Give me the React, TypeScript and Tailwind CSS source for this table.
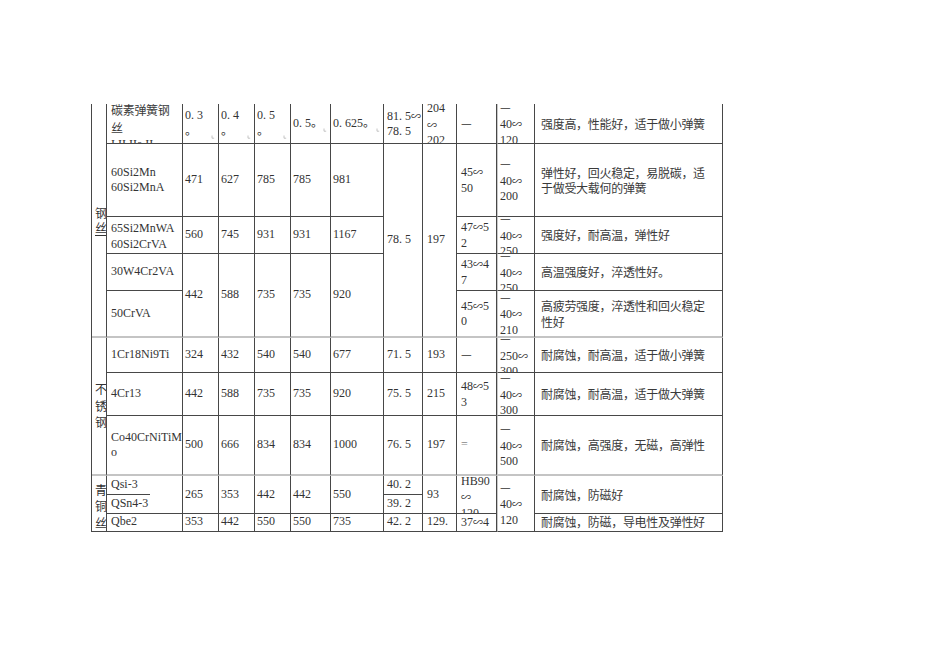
import React from 'react';

const M = "font-['Liberation_Serif','Noto_Sans_CJK_SC',serif] text-[12px] leading-[15.5px] text-[#333]";
const C =
  "font-['Noto_Sans_CJK_SC',sans-serif] text-[12px] leading-[15.5px] tracking-[-0.3px] text-[#3a3a3a]";
const DASH = "font-['Noto_Sans_CJK_SC',sans-serif] tracking-normal";

const P2 = 'pl-[4px]';
const PN = 'pl-[2px]';
const P8 = 'pl-[3px]';
const P9 = 'pl-[4px]';
const P10 = 'pl-[4px]';
const P11 = 'pl-[2px]';
const P12 = 'pl-[6px]';

type CellProps = {
  pad?: string;
  span?: string;
  grey?: boolean;
  top?: boolean;
  light?: boolean;
  font?: string;
  extra?: string;
  children?: React.ReactNode;
};

function Cell({ pad = '', span = '', grey, top, light, font = M, extra = '', children }: CellProps) {
  const cls = [
    'relative flex flex-col overflow-hidden border-r border-r-[#474747]',
    grey ? 'border-b-2 border-b-[#c4c4c4]' : 'border-b border-b-[#474747]',
    top ? 'justify-start' : 'justify-center',
    light ? 'border-l border-l-[#c8c8c8]' : '',
    pad,
    span,
    font,
    extra,
  ].join(' ');
  return <div className={cls}>{children}</div>;
}

function Tilde() {
  return <span className="font-['Noto_Sans_CJK_SC',sans-serif] text-[10px] text-[#333]">∽</span>;
}

function TL({ s }: { s: string }) {
  const parts = s.split('∽');
  return (
    <>
      {parts.map((p, i) => (
        <React.Fragment key={i}>
          {i > 0 && <Tilde />}
          {p}
        </React.Fragment>
      ))}
    </>
  );
}

function L({ children }: { children: React.ReactNode }) {
  return <div className="whitespace-nowrap">{typeof children === 'string' ? <TL s={children} /> : children}</div>;
}

function Dash() {
  return <span className={DASH}>—</span>;
}

function Mark({ high }: { high?: boolean }) {
  return (
    <svg
      className={high ? 'absolute right-[3px] bottom-[11px]' : 'absolute right-[3px] bottom-[4px]'}
      width="4"
      height="4"
      viewBox="0 0 4 4"
    >
      <path d="M1 0.5 V3.2 H3.2" stroke="#b5b5b5" strokeWidth="0.8" fill="none" />
    </svg>
  );
}

function Nums({ v, grey, span, top }: { v: string[]; grey?: boolean; span?: string; top?: boolean }) {
  return (
    <>
      {v.map((x, i) => (
        <Cell key={i} pad={PN} grey={grey} span={span} top={top}>
          <L>{x}</L>
        </Cell>
      ))}
    </>
  );
}

function Range({ a, b, grey, top, span }: { a: string; b: string; grey?: boolean; top?: boolean; span?: string }) {
  return (
    <Cell pad={P11} light grey={grey} top={top} span={span}>
      <L>
        <Dash />
      </L>
      <L>{a}</L>
      <L>{b}</L>
    </Cell>
  );
}

function Desc({ lines, grey, span, top }: { lines: string[]; grey?: boolean; span?: string; top?: boolean }) {
  return (
    <Cell pad={P12} font={C} grey={grey} span={span} top={top}>
      {lines.map((l, i) => (
        <div key={i} className="whitespace-nowrap">
          {l}
        </div>
      ))}
    </Cell>
  );
}

function Cat({ chars, span, grey, lead }: { chars: string[]; span: string; grey?: boolean; lead: string }) {
  return (
    <Cell
      pad="pl-[3px]"
      span={span}
      grey={grey}
      font={"font-['Noto_Sans_CJK_SC',sans-serif] text-[12px] text-[#333] " + lead}
    >
      {chars.map((c, i) => (
        <div key={i} className={i === 1 && chars.length === 2 ? 'underline underline-offset-2' : ''}>
          {c}
        </div>
      ))}
    </Cell>
  );
}

export default function App() {
  return (
    <div className="w-[950px] h-[672px] bg-white overflow-hidden">
      <div className="pl-[91px] pt-[104px]">
        <div className="grid w-fit border-l border-l-[#474747] grid-cols-[15px_76px_36px_36px_36px_40px_53px_39px_34px_40px_38px_188px] grid-rows-[40px_73px_37px_37px_47px_35px_43px_60px_19px_19px_18px]">
          {/* Row 1 */}
          <Cat chars={['钢', '丝']} span="row-span-5" grey lead="leading-[15px]" />
          <Cell pad={P2} extra="pt-[8px]">
            <div className="whitespace-nowrap">
              <span className={C}>碳素弹簧钢</span>
            </div>
            <div className="whitespace-nowrap">
              <span className={C}>丝</span>
            </div>
            <L>I II IIa II</L>
          </Cell>
          <Cell pad={PN}>
            <L>0. 3</L>
            <L>。</L>
            <Mark />
          </Cell>
          <Cell pad={PN}>
            <L>0. 4</L>
            <L>。</L>
            <Mark />
          </Cell>
          <Cell pad={PN}>
            <L>0. 5</L>
            <L>。</L>
            <Mark />
          </Cell>
          <Cell pad={PN}>
            <L>0. 5。</L>
            <Mark high />
          </Cell>
          <Cell pad={PN}>
            <L>0. 625。</L>
            <Mark high />
          </Cell>
          <Cell pad={P8}>
            <L>81. 5∽</L>
            <L>78. 5</L>
          </Cell>
          <Cell pad={P9} extra="pt-[3px]">
            <L>204</L>
            <L>∽</L>
            <L>202</L>
          </Cell>
          <Cell pad={P10}>
            <L>
              <Dash />
            </L>
          </Cell>
          <Range a="40∽" b="120" />
          <Desc lines={['强度高，性能好，适于做小弹簧']} />

          {/* Row 2 */}
          <Cell pad={P2}>
            <L>60Si2Mn</L>
            <L>60Si2MnA</L>
          </Cell>
          <Nums v={['471', '627', '785', '785', '981']} />
          <Cell pad={P8} span="row-span-4" grey>
            <L>78. 5</L>
          </Cell>
          <Cell pad={P9} span="row-span-4" grey>
            <L>197</L>
          </Cell>
          <Cell pad={P10}>
            <L>45∽</L>
            <L>50</L>
          </Cell>
          <Range a="40∽" b="200" />
          <Desc lines={['弹性好，回火稳定，易脱碳，适', '于做受大载何的弹簧']} />

          {/* Row 3 */}
          <Cell pad={P2} extra="pt-[3px]">
            <L>65Si2MnWA</L>
            <L>60Si2CrVA</L>
          </Cell>
          <Nums v={['560', '745', '931', '931', '1167']} />
          <Cell pad={P10}>
            <L>47∽5</L>
            <L>2</L>
          </Cell>
          <Range a="40∽" b="250" />
          <Desc lines={['强度好，耐高温，弹性好']} />

          {/* Row 4 */}
          <Cell pad={P2}>
            <L>30W4Cr2VA</L>
          </Cell>
          <Nums v={['442', '588', '735', '735', '920']} span="row-span-2" grey />
          <Cell pad={P10}>
            <L>43∽4</L>
            <L>7</L>
          </Cell>
          <Range a="40∽" b="250" />
          <Desc lines={['高温强度好，淬透性好。']} />

          {/* Row 5 */}
          <Cell pad={P2} grey>
            <L>50CrVA</L>
          </Cell>
          <Cell pad={P10} grey>
            <L>45∽5</L>
            <L>0</L>
          </Cell>
          <Range a="40∽" b="210" grey />
          <Desc lines={['高疲劳强度，淬透性和回火稳定', '性好']} grey />

          {/* Row 6 */}
          <Cat chars={['不', '锈', '钢']} span="row-span-3" grey lead="leading-[16.5px]" />
          <Cell pad={P2}>
            <L>1Cr18Ni9Ti</L>
          </Cell>
          <Nums v={['324', '432', '540', '540', '677']} />
          <Cell pad={P8}>
            <L>71. 5</L>
          </Cell>
          <Cell pad={P9}>
            <L>193</L>
          </Cell>
          <Cell pad={P10}>
            <L>
              <Dash />
            </L>
          </Cell>
          <Range a="250∽" b="300" />
          <Desc lines={['耐腐蚀，耐高温，适于做小弹簧']} />

          {/* Row 7 */}
          <Cell pad={P2}>
            <L>4Cr13</L>
          </Cell>
          <Nums v={['442', '588', '735', '735', '920']} />
          <Cell pad={P8}>
            <L>75. 5</L>
          </Cell>
          <Cell pad={P9}>
            <L>215</L>
          </Cell>
          <Cell pad={P10}>
            <L>48∽5</L>
            <L>3</L>
          </Cell>
          <Range a="40∽" b="300" />
          <Desc lines={['耐腐蚀，耐高温，适于做大弹簧']} />

          {/* Row 8 */}
          <Cell pad={P2} grey>
            <L>Co40CrNiTiM</L>
            <L>o</L>
          </Cell>
          <Nums v={['500', '666', '834', '834', '1000']} grey />
          <Cell pad={P8} grey>
            <L>76. 5</L>
          </Cell>
          <Cell pad={P9} grey>
            <L>197</L>
          </Cell>
          <Cell pad={P10} grey>
            <L>
              <span className="text-[#888]">=</span>
            </L>
          </Cell>
          <Range a="40∽" b="500" grey />
          <Desc lines={['耐腐蚀，高强度，无磁，高弹性']} grey />

          {/* Row 9 */}
          <Cat chars={['青', '铜', '丝']} span="row-span-3" lead="leading-[16.5px] pt-[6px]" />
          <Cell span="row-span-2" top>
            <div className="h-[19px] w-[43px] border-b border-b-[#474747] pl-[4px] flex items-center whitespace-nowrap">
              Qsi-3
            </div>
            <div className="h-[18px] pl-[4px] flex items-center whitespace-nowrap">QSn4-3</div>
          </Cell>
          <Nums v={['265', '353', '442', '442', '550']} span="row-span-2" />
          <Cell pad={P8}>
            <L>40. 2</L>
          </Cell>
          <Cell pad={P9} span="row-span-2">
            <L>93</L>
          </Cell>
          <Cell pad={P10} span="row-span-2" extra="pt-[6px]">
            <L>HB90</L>
            <L>∽</L>
            <L>120</L>
          </Cell>
          <Range a="40∽" b="120" span="row-span-3" />
          <Desc lines={['耐腐蚀，防磁好']} span="row-span-2" />

          {/* Row 10 */}
          <Cell pad={P8}>
            <L>39. 2</L>
          </Cell>

          {/* Row 11 */}
          <Cell pad={P2} top>
            <L>Qbe2</L>
          </Cell>
          <Nums v={['353', '442', '550', '550', '735']} top />
          <Cell pad={P8} top>
            <L>42. 2</L>
          </Cell>
          <Cell pad={P9} top>
            <L>129.</L>
            <L>5</L>
          </Cell>
          <Cell pad={P10} top>
            <L>37∽4</L>
            <L>2</L>
          </Cell>
          <Desc lines={['耐腐蚀，防磁，导电性及弹性好']} top />
        </div>
      </div>
    </div>
  );
}
